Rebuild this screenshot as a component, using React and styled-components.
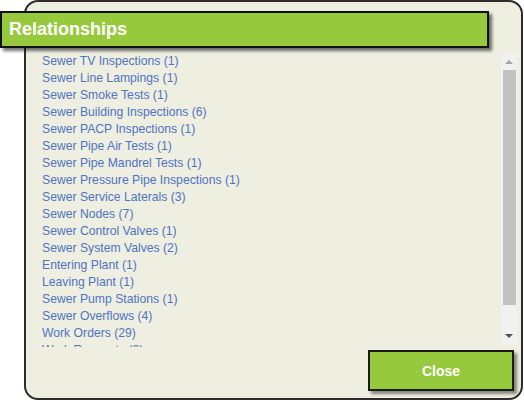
import React from "react";
import styled, { createGlobalStyle } from "styled-components";

const Global = createGlobalStyle`
  html, body { margin: 0; padding: 0; background: #ffffff; }
  body { font-family: "Liberation Sans", Arial, sans-serif; }
  * { box-sizing: border-box; }
`;

const Panel = styled.div`
  margin-left: 24px;
  width: 499px;
  height: 400px;
  border: 2px solid #2d2d2d;
  border-radius: 14px;
  background: #eeeee1;
  display: flex;
  flex-direction: column;
`;

const Header = styled.div`
  margin: 9px 0 0 -26px;
  width: 489px;
  height: 37px;
  background: #97c93d;
  border: 2px solid #111;
  box-shadow: 3px 3px 3px rgba(0, 0, 0, 0.55);
  display: flex;
  align-items: center;
  padding-left: 7px;
  color: #fff;
  font-weight: bold;
  font-size: 18px;
  position: relative;
  z-index: 1;
`;

const Body = styled.div`
  margin-top: 5px;
  height: 294px;
  display: flex;
`;

const List = styled.ul`
  flex: 1;
  list-style: none;
  margin: 0;
  padding: 0 0 0 16px;
  overflow: hidden;
`;

const Item = styled.li`
  height: 17px;
  line-height: 17px;
  font-size: 12.2px;
  color: #4e74c2;
  white-space: nowrap;
`;

const Track = styled.div`
  width: 16px;
  margin: 0 4px 2px 0;
  background: #f1f1f1;
  display: flex;
  flex-direction: column;
  align-items: center;
`;

const Arrow = styled.div`
  height: 17px;
  display: flex;
  align-items: center;
  justify-content: center;
  width: 100%;
`;

const Thumb = styled.div`
  width: 13px;
  background: #c1c1c1;
  height: 235px;
`;

const Spacer = styled.div`
  flex: 1;
`;

const Footer = styled.div`
  display: flex;
  justify-content: flex-end;
  padding: 3px 7px 0 0;
`;

const Button = styled.button`
  width: 146px;
  height: 41px;
  background: #97c93d;
  border: 2px solid #1a1a1a;
  box-shadow: 3px 3px 3px rgba(0, 0, 0, 0.45);
  color: #fff;
  font-family: "Liberation Sans", Arial, sans-serif;
  font-weight: bold;
  font-size: 14px;
  padding: 0;
  cursor: pointer;
`;

const items = [
  "Sewer TV Inspections (1)",
  "Sewer Line Lampings (1)",
  "Sewer Smoke Tests (1)",
  "Sewer Building Inspections (6)",
  "Sewer PACP Inspections (1)",
  "Sewer Pipe Air Tests (1)",
  "Sewer Pipe Mandrel Tests (1)",
  "Sewer Pressure Pipe Inspections (1)",
  "Sewer Service Laterals (3)",
  "Sewer Nodes (7)",
  "Sewer Control Valves (1)",
  "Sewer System Valves (2)",
  "Entering Plant (1)",
  "Leaving Plant (1)",
  "Sewer Pump Stations (1)",
  "Sewer Overflows (4)",
  "Work Orders (29)",
  "Work Requests (3)",
];

const Tri = ({ up }) => (
  <svg width="8" height="5" viewBox="0 0 8 5">
    <path d={up ? "M0 5 L4 1 L8 5 Z" : "M0 0 L8 0 L4 4 Z"} fill={up ? "#a3a3a3" : "#505050"} />
  </svg>
);

export default function App() {
  return (
    <>
      <Global />
      <Panel>
        <Header>Relationships</Header>
        <Body>
          <List>
            {items.map((t) => (
              <Item key={t}>{t}</Item>
            ))}
          </List>
          <Track>
            <Arrow><Tri up /></Arrow>
            <Thumb />
            <Spacer />
            <Arrow><Tri /></Arrow>
          </Track>
        </Body>
        <Footer>
          <Button>Close</Button>
        </Footer>
      </Panel>
    </>
  );
}
